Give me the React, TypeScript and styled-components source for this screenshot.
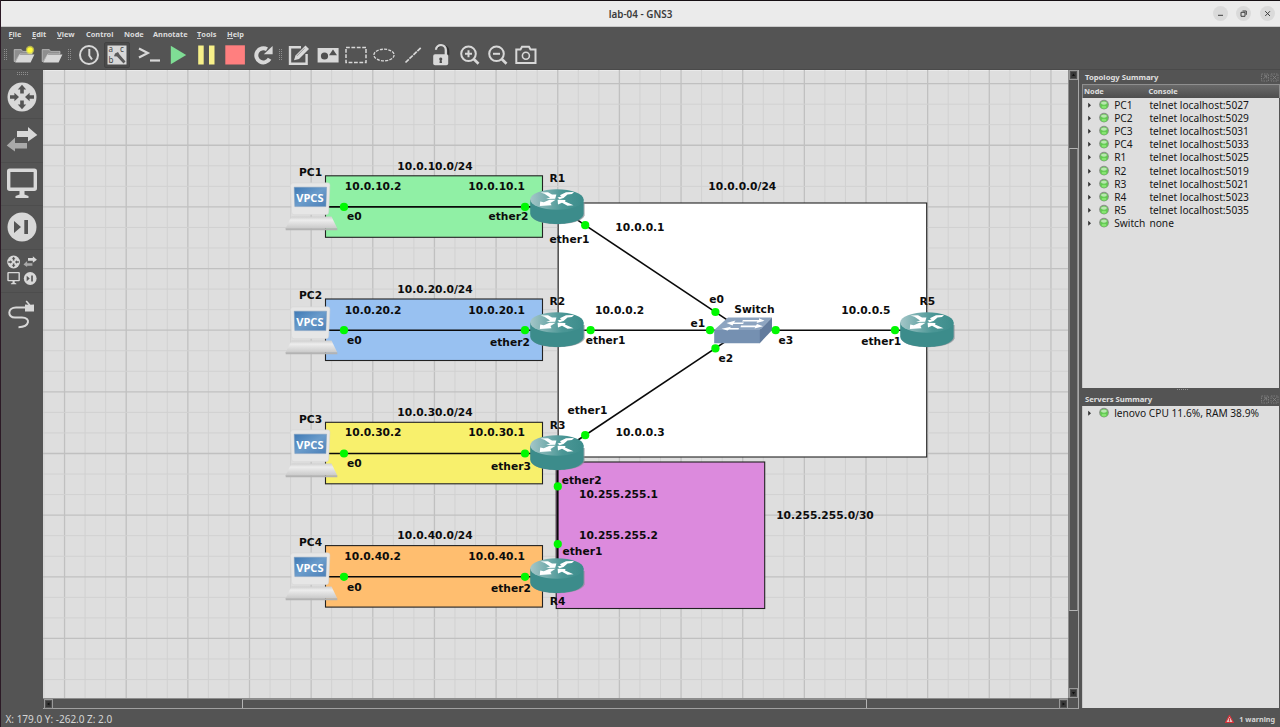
import React from "react";
import styled, { createGlobalStyle } from "styled-components";

const GlobalStyle = createGlobalStyle`
  * { box-sizing: border-box; }
  html, body { margin: 0; padding: 0; background: #545454; }
  body { overflow: hidden; }
`;

const ui = `"Noto Sans", "Open Sans", sans-serif`;
const INK = "#d8d8d8";

const Window = styled.div`
  display: flex;
  flex-direction: column;
  width: 1280px;
  height: 727px;
  background: #545454;
  border-left: 1px solid #2c1a26;
  font-family: ${ui};
  overflow: hidden;
`;

const TitleBar = styled.header`
  flex: none;
  height: 27px;
  border-top: 1px solid #150f13;
  border-bottom: 1px solid #c9c9c9;
  background: #ebebeb;
  display: grid;
  grid-template-columns: 1fr auto 1fr;
  align-items: center;
  padding-top: 1px;
  font-size: 9.9px;
  font-weight: 600;
  color: #3b3b3b;
`;

const WindowButtons = styled.div`
  display: flex;
  justify-content: flex-end;
  gap: 8.6px;
  padding-right: 5px;
  margin-top: -1px;
`;

const RoundButton = styled.button`
  width: 15px;
  height: 15px;
  padding: 0;
  border: 0;
  border-radius: 50%;
  background: #dadada;
  display: flex;
`;

const MenuBar = styled.nav`
  flex: none;
  display: flex;
  align-items: center;
  height: 14px;
  padding-left: 7.5px;
  font-size: 7.4px;
  font-weight: 700;
  line-height: 14px;
  color: #dcdcdc;
`;

const MenuItem = styled.span<{ $w: number }>`
  width: ${(p) => p.$w}px;
  white-space: nowrap;
`;

const Mnemonic = styled.span`
  border-bottom: 1px solid #d0d0d0;
  display: inline-block;
  line-height: 8px;
`;

const ToolBar = styled.div`
  flex: none;
  height: 29px;
  padding: 0 0 1px 0.6px;
  display: flex;
  align-items: center;
  border-bottom: 1px solid #4a4a4a;
`;

const DragDots = styled.svg`
  flex: none;
  display: block;
  fill: #8e8e8e;
`;

const Tool = styled.button<{ $active?: boolean; $gap?: number }>`
  flex: none;
  width: 28.4px;
  height: 27px;
  margin: 0 0 0 ${(p) => p.$gap ?? 0}px;
  padding: 0;
  border: 0;
  background: none;
  display: flex;
  align-items: center;
  justify-content: center;
  svg {
    display: block;
    box-sizing: content-box;
    padding: 1px;
    border: 1px solid ${(p) => (p.$active ? "#424242" : "transparent")};
    background: ${(p) => (p.$active ? "#4a4a4a" : "none")};
    border-radius: 2px;
  }
`;

const Body = styled.main`
  flex: none;
  height: 639px;
  display: flex;
`;

const DeviceBar = styled.aside`
  flex: none;
  width: 42px;
  padding-top: 1px;
  display: flex;
  flex-direction: column;
`;

const DeviceGrip = styled.div`
  height: 4px;
  padding: 1px 0 0 2px;
  display: flex;
  justify-content: center;
`;

const Device = styled.button`
  flex: none;
  height: 43.4px;
  padding: 0;
  border: 0;
  background: none;
  display: flex;
  align-items: center;
  justify-content: center;
  & + & { box-shadow: inset 0 1px 0 -0.2px #4b4b4b; }
`;

const Workspace = styled.section`
  flex: none;
  width: 1036px;
  display: grid;
  grid-template-columns: 1025px 10px;
  grid-template-rows: 628px 10px;
  background: #545454;
  border-right: 1px solid #a8a8a8;
  border-bottom: 1px solid #a0a0a0;
`;

const Viewport = styled.div`
  position: relative;
  overflow: hidden;
  background: #dedede;
  box-shadow: inset 0 1px #eaeaea;
`;

const Scene = styled.div`
  position: absolute;
  left: -43px;
  top: -70px;
  width: 1280px;
  height: 727px;
`;

const SceneLayer = styled.svg`
  position: absolute;
  left: 0;
  top: 0;
`;

const Label = styled.span<{ $x: number; $y: number }>`
  position: absolute;
  left: ${(p) => p.$x}px;
  top: ${(p) => Math.round(p.$y - 6.6)}px;
  font: 700 10.67px/14px "DejaVu Sans", sans-serif;
  color: #0c0c0c;
  white-space: pre;
`;

const NodeIcon = styled.svg<{ $x: number; $y: number }>`
  position: absolute;
  left: ${(p) => p.$x}px;
  top: ${(p) => p.$y}px;
  overflow: visible;
`;

const ScrollV = styled.div`
  display: flex;
  flex-direction: column;
  border-left: 1px solid #8c8c8c;
`;

const ScrollH = styled.div`
  display: flex;
  padding-left: 1px;
  border-top: 1px solid #8c8c8c;
`;

const ThumbV = styled.div`
  margin-top: 68px;
  height: 463px;
  border: 1px solid #b4b4b4;
  border-left-color: #8c8c8c;
  border-right-color: #8c8c8c;
`;

const ThumbH = styled.div`
  margin-left: 189px;
  width: 625px;
  border: 1px solid #b4b4b4;
  border-top-color: #8c8c8c;
  border-bottom: 0;
`;

const ArrowButton = styled.span<{ $push?: "top" | "left" }>`
  flex: none;
  width: 9px;
  height: 10px;
  border: 1px solid #999;
  display: flex;
  ${(p) => (p.$push ? `margin-${p.$push}: auto;` : "")}
`;

const Docks = styled.aside`
  flex: 1;
  min-width: 0;
  padding-left: 3px;
  display: flex;
  flex-direction: column;
`;

const DockTitle = styled.div`
  flex: none;
  height: 14px;
  padding: 0 0 0 3px;
  display: flex;
  align-items: center;
  justify-content: space-between;
  font-size: 7.7px;
  font-weight: 700;
  line-height: 14px;
  color: #e0e0e0;
  svg { margin-right: 1px; }
`;

const HeaderRow = styled.div`
  flex: none;
  height: 14px;
  display: grid;
  grid-template-columns: 64.5px 1fr;
  padding-left: 1px;
  font-size: 7.4px;
  font-weight: 700;
  line-height: 13px;
  color: #e0e0e0;
  border: 1px solid #8f8f8f;
  border-width: 1px 1px 0 1px;
  background: linear-gradient(#6a6a6a, #4e4e4e);
`;

const List = styled.div<{ $h: number }>`
  flex: none;
  height: ${(p) => p.$h}px;
  padding-top: 1px;
  background: #dedede;
  border-left: 1px solid #c8c8c8;
  margin-right: 1px;
`;

const Row = styled.div`
  display: grid;
  grid-template-columns: 15.2px 16px 35.2px 1fr;
  align-items: center;
  height: 13.11px;
  font-size: 10.2px;
  line-height: 13.11px;
  color: #161616;
  white-space: nowrap;
`;

const Splitter = styled.div`
  flex: none;
  height: 4px;
  padding-left: 3px;
  display: flex;
  align-items: center;
  justify-content: center;
`;

const StatusBar = styled.footer`
  flex: 1;
  display: flex;
  align-items: center;
  justify-content: space-between;
  padding: 2px 5px 0 4.5px;
  font-size: 10px;
  color: #d6d6d6;
`;

const Warning = styled.span`
  display: flex;
  align-items: center;
  gap: 5px;
  font-size: 7.2px;
  font-weight: 700;
`;

const RouterGlyph = () => (
  <>
    <circle r="14.5" fill={INK} />
    {[0, 90, 180, 270].map((a) => (
      <path key={a} transform={`rotate(${a})`} fill="#545454"
        d={a % 180 === 0 ? "M0-12.2 4.2-7.6H1.8V-3.4H-1.8V-7.6H-4.2Z" : "M0-3 4.2-7.6H1.8V-12H-1.8V-7.6H-4.2Z"} />
    ))}
  </>
);

const SwapGlyph = () => (
  <>
    <path d="M-5-9H6V-13L15.3-5 6 1.5V-3H-5Z" fill={INK} />
    <path d="M5 3H-7V-2.2L-15.3 5.5-7 11.5V8.5H5Z" fill="#a9a9a9" />
  </>
);

const ScreenGlyph = () => (
  <>
    <rect x="-13.3" y="-12.8" width="26.6" height="19" rx="1" fill="none" stroke={INK} strokeWidth="3.4" />
    <path d="M-2.5 7H2.5V11.5L6.5 13V15H-6.5V13L-2.5 11.5Z" fill={INK} />
  </>
);

const SkipGlyph = () => (
  <>
    <circle r="14.5" fill={INK} />
    <path d="M-8-6-1 0-8 6ZM2.3-7H6V7H2.3Z" fill="#545454" />
  </>
);

const deviceIcons: React.ReactNode[] = [
  <RouterGlyph />,
  <SwapGlyph />,
  <ScreenGlyph />,
  <SkipGlyph />,
  <>
    <g transform="translate(-8.4 -8) scale(.44)"><RouterGlyph /></g>
    <g transform="translate(8.2 -8) scale(.44)"><SwapGlyph /></g>
    <g transform="translate(-8.4 8) scale(.42)"><ScreenGlyph /></g>
    <g transform="translate(8.2 8.5) scale(.44)"><SkipGlyph /></g>
  </>,
  <>
    <path d="M4-6.5H-6C-14.5-6.5-15 3.5-7 3.5H0C9 3.5 8 13-3.5 13.2" fill="none" stroke={INK} strokeWidth="2" />
    <path d="M3-9.5 6.5-9.2 3.6-12.6 4.8-13.6 8.5-9.3 12-9.5V-2.4H3Z" fill={INK} />
  </>,
];

const folder = (
  <>
    <path d="M1.2 5.6H8.3L9.6 7.4H19V9.8H7L2.4 17.5H1.2Z" fill="#8f8f8f" stroke={INK} strokeWidth=".6" />
    <path d="M6.5 10.4H21.4L17.6 18.6H2.2Z" fill={INK} />
  </>
);

type ToolDef = { icon: React.ReactNode; active?: boolean; gap?: number };

const fileTools: ToolDef[] = [
  { icon: <>{folder}<circle cx="17" cy="6" r="4.2" fill="#f1ef4c" opacity=".6" /><circle cx="17" cy="6" r="2.8" fill="#fffb3a" /></> },
  { icon: folder },
];

const controlTools: ToolDef[] = [
  { icon: <g fill="none" stroke={INK} strokeWidth="2"><circle cx="11" cy="11" r="9" /><path d="M11.3 5V11.5L14 15.5" /></g> },
  {
    active: true,
    icon: <>
      <rect x="1.5" y="1.5" width="19" height="19" fill={INK} />
      <g fontFamily="Noto Sans, sans-serif" fontSize="8" fill="#444"><text x="2.5" y="8">a</text><text x="14" y="8">c</text><text x="2.5" y="18.8">b</text></g>
      <path d="M9 9.5 12 8 13.5 10.5 19.5 17.5 17.5 19.5 11 12.5 8 12.3Z" fill="#5b5b5b" />
    </>,
  },
  { gap: 4, icon: <g fill="none" stroke={INK} strokeWidth="2.2"><path d="M1 4.5 9.8 9 1 13.5" /><path d="M12 16.5H22" /></g> },
  { icon: <path d="M3.8 1.8V20.2L19.2 11Z" fill="#7fdd95" /> },
  { icon: <path d="M3.2 1.5H8.7V20.5H3.2ZM14 1.5H19.5V20.5H14Z" fill="#f7f089" /> },
  { icon: <path d="M1.3 1.3H20.9V20.5H1.3Z" fill="#ff7f7f" /> },
  { icon: <><path d="M17.6 14.8A7.1 7.1 0 1 1 15 5.2" fill="none" stroke={INK} strokeWidth="4" /><path d="M20.6 2V10.3H11.8Z" fill={INK} /></> },
];

const annotateTools: ToolDef[] = [
  { icon: <><path d="M13 3.2H2V19.8H18.6V10" fill="none" stroke={INK} strokeWidth="2.4" /><path d="M6 16.2 7.5 11.5 17.5 1.5 21 5 11 15Z" fill={INK} /><path d="M8.8 12 16.5 4.3" stroke="#777" strokeWidth=".7" /></> },
  { icon: <><rect x=".6" y="4" width="21" height="14.5" fill={INK} /><circle cx="7.5" cy="12" r="3.6" fill="#505050" /><path d="M12 11.2 16 5.4 20 11.2Z" fill="#505050" /></> },
  { icon: <rect x="1" y="3.5" width="20" height="15" fill="none" stroke={INK} strokeWidth="1.5" strokeDasharray="3.8 1.6" /> },
  { icon: <ellipse cx="11" cy="11" rx="10.1" ry="5.8" fill="none" stroke={INK} strokeWidth="1.3" strokeDasharray="3 1.2" /> },
  { icon: <path d="M3.5 18.5 18.8 3.8" stroke={INK} strokeWidth="1.7" strokeDasharray="4.6 .9" /> },
  { icon: <><path d="M6.5 5C8-.2 17.8.6 17.8 7V10.5" fill="none" stroke="#303030" strokeWidth="1.8" transform="translate(.6 .3)" /><path d="M6 5.8C6.4-.4 15.8-.4 15.8 6V11" fill="none" stroke={INK} strokeWidth="2.3" /><rect x="3.2" y="10.3" width="15" height="11" rx="1.8" fill={INK} /><path d="M10.7 13.5a1.5 1.5 0 0 1 1 2.7L12 18.9H9.5L9.8 16.2A1.5 1.5 0 0 1 10.7 13.5" fill="#4d4d4d" /></> },
  { icon: <g fill="none" stroke={INK} strokeWidth="2"><circle cx="9.5" cy="9.8" r="7.3" /><path d="M14.7 15 19.5 19.7" strokeWidth="2.7" /><path d="M9.5 6.3V13.3M6 9.8H13" /></g> },
  { icon: <g fill="none" stroke={INK} strokeWidth="2"><circle cx="9.5" cy="9.8" r="7.3" /><path d="M14.7 15 19.5 19.7" strokeWidth="2.7" /><path d="M6 9.8H13" /></g> },
  { icon: <g fill="none" stroke={INK} strokeWidth="2"><path d="M1.3 5.5H5.5L7 2.8H14L15.5 5.5H20.5V19H1.3Z" /><circle cx="10.9" cy="11.8" r="3.5" strokeWidth="1.6" /></g> },
];

const menus: [string, number, boolean][] = [
  ["File", 23.5, true], ["Edit", 25, true], ["View", 29, true], ["Control", 38, false],
  ["Node", 29, false], ["Annotate", 44, false], ["Tools", 30, true], ["Help", 24, true],
];

const networks = [
  { x: 325.5, y: 175.8, w: 217, h: 61.5, fill: "#90f0a5" },
  { x: 325.5, y: 299, w: 217, h: 61.5, fill: "#98c1f1" },
  { x: 325.5, y: 422.3, w: 217, h: 61.5, fill: "#f8f06c" },
  { x: 325.5, y: 545.6, w: 217, h: 61.5, fill: "#ffbe6f" },
  { x: 558.2, y: 203, w: 368.5, h: 254, fill: "#ffffff" },
  { x: 556.2, y: 462, w: 208.5, h: 146.5, fill: "#dc8add" },
];

const links = [
  [310, 206.9, 557, 206.9], [310, 330.2, 557, 330.2], [310, 453.5, 557, 453.5], [310, 576.8, 557, 576.8],
  [557.8, 206.9, 742.5, 330.2], [557.8, 330.2, 742.5, 330.2], [557.8, 453.5, 742.5, 330.2],
  [742.5, 330.2, 927.5, 330.2], [557.8, 453.5, 557.8, 576.8],
];

const ports = [
  [344, 206.9], [525, 206.9], [344, 330.2], [525, 330.2], [344, 453.5], [525, 453.5], [344, 576.8], [525, 576.8],
  [585.2, 225.2], [590.6, 330.2], [585.2, 435.2], [557.8, 486.4], [557.8, 544.1],
  [715.4, 312], [710, 330.2], [715.4, 348.4], [775.7, 330.2], [895, 330.2],
];

const labels: [string, number, number][] = [
  ["PC1", 299, 173], ["10.0.10.0/24", 397.3, 166.5], ["10.0.10.2", 344.8, 186.5], ["10.0.10.1", 468.3, 186.5],
  ["e0", 347, 217], ["ether2", 488.5, 217], ["R1", 549.5, 179], ["ether1", 549.5, 240], ["10.0.0.1", 615.3, 228],
  ["10.0.0.0/24", 708.3, 186.5],
  ["PC2", 299, 296], ["10.0.20.0/24", 397.3, 289.5], ["10.0.20.2", 344.8, 310.2], ["10.0.20.1", 468.3, 310.2],
  ["e0", 347, 340.2], ["ether2", 490, 342.2], ["R2", 549.5, 302], ["ether1", 585.7, 340.2], ["10.0.0.2", 595, 310.3],
  ["PC3", 299, 419.5], ["10.0.30.0/24", 397.3, 412.5], ["10.0.30.2", 344.8, 433], ["10.0.30.1", 468.3, 433],
  ["e0", 347, 464], ["ether3", 491, 466.5], ["R3", 549.7, 425.5], ["ether1", 567.5, 410.3], ["10.0.0.3", 615.5, 432.7],
  ["ether2", 561.8, 480.3], ["10.255.255.1", 579, 494.7], ["10.255.255.2", 579, 535.6], ["ether1", 562.5, 551.6],
  ["PC4", 299, 542.5], ["10.0.40.0/24", 397.3, 535.7], ["10.0.40.2", 344.3, 556.2], ["10.0.40.1", 468.3, 556.2],
  ["e0", 347, 587.3], ["ether2", 491, 589], ["R4", 549.7, 601.2], ["10.255.255.0/30", 776.2, 515.5],
  ["e0", 709.3, 299.3], ["e1", 690.5, 323.3], ["e2", 718.5, 358.5], ["e3", 778.5, 341],
  ["Switch", 734.3, 309.5], ["10.0.0.5", 841.3, 310.3], ["ether1", 861.3, 341.5], ["R5", 919.5, 302],
];

const topology: [string, string][] = [
  ["PC1", "telnet localhost:5027"], ["PC2", "telnet localhost:5029"], ["PC3", "telnet localhost:5031"],
  ["PC4", "telnet localhost:5033"], ["R1", "telnet localhost:5025"], ["R2", "telnet localhost:5019"],
  ["R3", "telnet localhost:5021"], ["R4", "telnet localhost:5023"], ["R5", "telnet localhost:5035"],
  ["Switch", "none"],
];

const Router = ({ x, y }: { x: number; y: number }) => (
  <NodeIcon $x={x - 27} $y={y - 18.6} width="55" height="37">
    <path d="M1 13V26.5C4 38 51 38 54.6 26.5V13Z" fill="#8a8f96" opacity=".75" />
    <path d="M.2 10.5V24.5C1 38.5 53 38.5 53.6 24.5V10.5Z" fill="#3c8c8b" />
    <ellipse cx="26.9" cy="10.5" rx="26.7" ry="10.2" fill="url(#routerTop)" />
    <g fill="#fff">
      <path d="M10.5 3.5 18 3.2 22 5.6 26.4 5.4 25.2 9.8 16 10 20 8.4 14.5 4.7Z" />
      <path d="M44 3 42 5 37.5 5.4 33.5 9 29.5 10.2 27.5 8.4 31.5 7.6 29.8 6.2 36 3.2Z" />
      <path d="M9.8 17 10.2 12.6 13.8 13.2 19.5 10.7 25.6 10.8 20.5 14 21.5 16.2Z" />
      <path d="M27.6 10.8 35.5 11 35 12.4 43.5 16.2 37.5 16.8 32 13.8 28 15.5Z" />
    </g>
  </NodeIcon>
);

const Vpcs = ({ x, y }: { x: number; y: number }) => (
  <NodeIcon $x={x - 26} $y={y - 24.5} width="53" height="50">
    <path d="M6.5 34.5H46.5L52.3 46.5H.5Z" fill="url(#keys)" />
    <path d="M.5 46.3H52.3V48.3H.8Z" fill="#b3b3b3" />
    <path d="M8 .8H42.5Q45 .8 44.9 3.3L43.7 30Q43.5 32.8 41 32.8H9.2Q6.7 32.8 6.5 30L5.6 3.3Q5.6 .8 8 .8Z" fill="#e6e6e6" stroke="#d3d3d3" strokeWidth=".5" />
    <path d="M9.2 5.2H41.6L40.9 24.6H9.8Z" fill="url(#screen)" stroke="#7f9dbd" strokeWidth=".5" />
    <text x="11.2" y="19.6" fontFamily="Open Sans, sans-serif" fontSize="9.8" fontWeight="700" fill="#fff" textLength="27.3" lengthAdjust="spacingAndGlyphs">VPCS</text>
  </NodeIcon>
);

const Switch = ({ x, y }: { x: number; y: number }) => (
  <NodeIcon $x={x - 29} $y={y - 13.5} width="58" height="27">
    <path d="M.2 13H46V26.2H.2Z" fill="#7590b1" />
    <path d="M.2 13 14 .6H58L45.8 13Z" fill="#8da4c0" />
    <path d="M45.8 13 58 .6V13.2L45.8 26.2Z" fill="#627b9d" />
    <g fill="#fff">
      <path d="M29 2.9H45V1.2L50.5 3.8 42.5 6 43.3 4.6H28Z" />
      <path d="M30 5.4 20 5.4 21.5 3.5 12.5 6.1 18.5 8.6 19.3 7H29Z" />
      <path d="M27 8.5H42L43 7 49 9.2 40.5 11.6 41.2 10.2H26.5Z" />
      <path d="M25 11H16L17 9.8 7.5 11.8 13.5 13.6 15 12.5H24.5Z" />
    </g>
  </NodeIcon>
);

const Led = () => (
  <svg width="11" height="13" viewBox="0 0 11 13">
    <circle cx="6" cy="5.6" r="4.9" fill="#8d968b" />
    <circle cx="6" cy="5.9" r="3.9" fill="#62c951" />
    <ellipse cx="6" cy="4.1" rx="2.9" ry="1.7" fill="#b9e7b0" />
    <ellipse cx="6" cy="8.1" rx="2.5" ry="1.4" fill="#86e472" />
  </svg>
);

const Branch = () => (
  <svg width="14" height="11" viewBox="0 0 14 11"><path d="M5.2 2.8 8 5.3 5.2 7.8Z" fill="#333" /></svg>
);

const DockButtons = () => (
  <svg width="18" height="9" viewBox="0 0 18 9" fill="none" stroke="#858585" strokeWidth=".8">
    <path d="M.5 1h7v7h-7zM10 1h7v7h-7z" strokeDasharray="1.5 1" />
    <path d="M2.2 6 5.5 2.8M3 2.8h2.7v2.7M11.5 2.5l4 4M15.5 2.5l-4 4" />
  </svg>
);

const Dots = ({ columns, rows }: { columns: number; rows: number }) => (
  <DragDots width={columns * 2} height={rows * 2}>
    {Array.from({ length: columns * rows }, (_, i) => (
      <rect key={i} x={(i % columns) * 2} y={Math.floor(i / columns) * 2} width="1" height="1" />
    ))}
  </DragDots>
);

const ToolGrip = styled.span`
  flex: none;
  width: 8px;
  display: flex;
  justify-content: center;
`;

const Arrow = ({ turn }: { turn: number }) => (
  <svg width="7" height="8" viewBox="0 0 7 8"><rect x=".8" y="1" width="5.4" height="6" fill="#383838" /><path d="M3.5 2.5 5 5H2Z" fill="#111" transform={`rotate(${turn} 3.5 4)`} /></svg>
);

const Tools = ({ items }: { items: ToolDef[] }) => (
  <>
    <ToolGrip><Dots columns={2} rows={6} /></ToolGrip>
    {items.map((t, i) => (
      <Tool key={i} $active={t.active} $gap={t.gap}><svg width="22" height="22" viewBox="0 0 22 22">{t.icon}</svg></Tool>
    ))}
  </>
);

const PITCH = 61.65;
const minor = PITCH / 3;

const GridLines = () => (
  <g>
    {Array.from({ length: 56 }, (_, i) => {
      const p = 557.75 + (i - 26) * minor;
      const major = (i - 26) % 3 === 0;
      return <path key={`v${i}`} d={`M${p} 70V700`} stroke={major ? "#c0c0c0" : "#d1d1d1"} strokeWidth={major ? 1.3 : 1} />;
    })}
    {Array.from({ length: 36 }, (_, i) => {
      const p = 206.9 + (i - 8) * minor;
      const major = (i - 8) % 3 === 0;
      return <path key={`h${i}`} d={`M43 ${p}H1070`} stroke={major ? "#c0c0c0" : "#d1d1d1"} strokeWidth={major ? 1.3 : 1} />;
    })}
  </g>
);

export default function App() {
  return (
    <Window>
      <GlobalStyle />
      <TitleBar>
        <span />
        <span>lab-04 - GNS3</span>
        <WindowButtons>
          {["M5 9.3h5", "M5 6.3h4v4h-4zM6.5 5h3.8v3.8", "M5.2 5.2l4.8 4.8M10 5.2l-4.8 4.8"].map((d) => (
            <RoundButton key={d}><svg width="15" height="15"><path d={d} fill="none" stroke="#3e3e3e" strokeWidth="1" /></svg></RoundButton>
          ))}
        </WindowButtons>
      </TitleBar>
      <MenuBar>
        {menus.map(([name, w, key]) => (
          <MenuItem key={name} $w={w}>{key ? <><Mnemonic>{name[0]}</Mnemonic>{name.slice(1)}</> : name}</MenuItem>
        ))}
      </MenuBar>
      <ToolBar>
        <Tools items={fileTools} />
        <Tools items={controlTools} />
        <Tools items={annotateTools} />
      </ToolBar>
      <Body>
        <DeviceBar>
          <DeviceGrip><Dots columns={6} rows={2} /></DeviceGrip>
          {deviceIcons.map((icon, i) => (
            <Device key={i}><svg width="34" height="34" viewBox="-17 -17 34 34">{icon}</svg></Device>
          ))}
        </DeviceBar>
        <Workspace>
          <Viewport>
            <Scene>
              <SceneLayer width="1280" height="727">
                <defs>
                  <linearGradient id="routerTop"><stop offset="0" stopColor="#a4c6c8" /><stop offset=".6" stopColor="#4b9796" /><stop offset="1" stopColor="#3c8c8b" /></linearGradient>
                  <linearGradient id="screen" x1="0" y1="0" x2="1" y2="1"><stop offset="0" stopColor="#3e79b5" /><stop offset=".5" stopColor="#6b9ccb" /><stop offset="1" stopColor="#4b7fb7" /></linearGradient>
                  <linearGradient id="keys" x1="0" y1="0" x2="0" y2="1"><stop offset="0" stopColor="#cfcfcf" /><stop offset=".3" stopColor="#ededed" /><stop offset="1" stopColor="#c9c9c9" /></linearGradient>
                </defs>
                <GridLines />
                {networks.map((n) => (
                  <rect key={`${n.x}-${n.y}`} x={n.x} y={n.y} width={n.w} height={n.h} fill={n.fill} stroke="#222" strokeWidth="1.1" />
                ))}
                {links.map(([x1, y1, x2, y2], i) => <line key={i} x1={x1} y1={y1} x2={x2} y2={y2} stroke="#0a0a0a" strokeWidth="1.6" />)}
              </SceneLayer>
              {[206.9, 330.2, 453.5, 576.8].map((y) => <Vpcs key={y} x={311} y={y} />)}
              {[207.1, 330.4, 453.7, 577].map((y) => <Router key={y} x={557.4} y={y} />)}
              <Router x={927.4} y={330.4} />
              <Switch x={742.9} y={330.2} />
              <SceneLayer width="1280" height="727">
                {ports.map(([x, y], i) => <circle key={i} cx={x} cy={y} r="4.1" fill="#00f800" />)}
              </SceneLayer>
              {labels.map(([text, x, y], i) => <Label key={i} $x={x} $y={y}>{text}</Label>)}
            </Scene>
          </Viewport>
          <ScrollV>
            <ArrowButton><Arrow turn={0} /></ArrowButton>
            <ThumbV />
            <ArrowButton $push="top"><Arrow turn={180} /></ArrowButton>
          </ScrollV>
          <ScrollH>
            <ArrowButton><Arrow turn={270} /></ArrowButton>
            <ThumbH />
            <ArrowButton $push="left"><Arrow turn={90} /></ArrowButton>
          </ScrollH>
          <span />
        </Workspace>
        <Docks>
          <DockTitle>Topology Summary<DockButtons /></DockTitle>
          <HeaderRow><span>Node</span><span>Console</span></HeaderRow>
          <List $h={290}>
            {topology.map(([name, console]) => (
              <Row key={name}><Branch /><Led /><span>{name}</span><span>{console}</span></Row>
            ))}
          </List>
          <Splitter><Dots columns={6} rows={1} /></Splitter>
          <DockTitle>Servers Summary<DockButtons /></DockTitle>
          <List $h={302}>
            <Row><Branch /><Led /><span>lenovo CPU 11.6%, RAM 38.9%</span></Row>
          </List>
        </Docks>
      </Body>
      <StatusBar>
        <span>X: 179.0 Y: -262.0 Z: 2.0</span>
        <Warning>
          <svg width="9" height="8" viewBox="0 0 9 8"><path d="M4.5.5 8.5 7.5H.5Z" fill="#e8c4c4" stroke="#d5323a" strokeWidth="1.2" /><path d="M4.5 3V6.6" stroke="#c33" strokeWidth=".9" /></svg>
          1 warning
        </Warning>
      </StatusBar>
    </Window>
  );
}
